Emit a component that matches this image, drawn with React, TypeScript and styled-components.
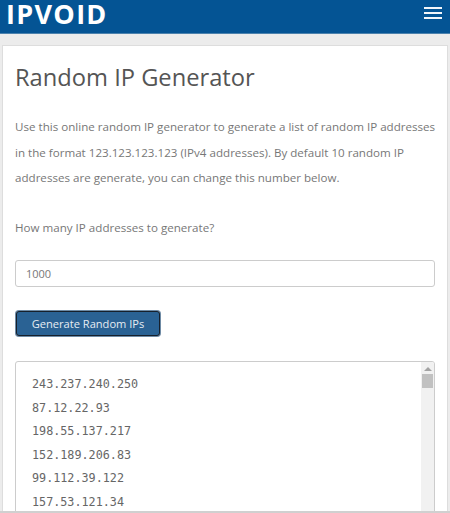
import { createGlobalStyle } from "styled-components";
import styled from "styled-components";

const ips = [
  "243.237.240.250",
  "87.12.22.93",
  "198.55.137.217",
  "152.189.206.83",
  "99.112.39.122",
  "157.53.121.34",
];

const GlobalStyle = createGlobalStyle`
  html, body {
    margin: 0;
    height: 513px;
    overflow: hidden;
    background: #ececec;
    font-family: "Open Sans", sans-serif;
  }
  * {
    box-sizing: border-box;
  }
`;

const Navbar = styled.header`
  display: flex;
  align-items: center;
  justify-content: space-between;
  height: 34px;
  padding: 0 7px 0 6px;
  background: #045494;
  border-bottom: 1px solid #4c82ad;
`;

const Brand = styled.div`
  color: #fff;
  font-size: 27px;
  font-weight: 700;
  letter-spacing: 1.3px;
  line-height: 27px;
  margin-top: -6px;
`;

const Burger = styled.div`
  display: flex;
  flex-direction: column;
  gap: 3px;
  width: 18px;
  margin-right: 1px;
  margin-top: -7px;
`;

const BurgerLine = styled.span`
  display: block;
  height: 2px;
  background: #f2f6fa;
`;

const Card = styled.main`
  height: 466px;
  margin: 11px 2px 0;
  padding: 0 12px;
  background: #fff;
  border: 1px solid #ddd;
  border-bottom: 0;
  overflow: hidden;
`;

const Title = styled.h1`
  margin: 15px 0 0;
  color: #555;
  font-size: 23.7px;
  font-weight: 400;
  line-height: 33px;
`;

const Text = styled.p`
  margin: 20px -4px 0 0;
  color: #777;
  font-size: 11.6px;
  line-height: 25.5px;
`;

const Label = styled(Text)`
  margin-top: 24px;
`;

const NumberInput = styled.input`
  display: block;
  width: 100%;
  height: 27px;
  margin-top: 20px;
  padding: 0 10px;
  color: #777;
  background: #fff;
  border: 1px solid #ccc;
  border-radius: 3px;
  font-family: inherit;
  font-size: 11px;
`;

const GenerateButton = styled.button`
  display: block;
  width: 144px;
  height: 25px;
  margin: 24px 0 0 1px;
  padding: 0;
  color: #e6edf3;
  background: #2a6294;
  border: 1px solid #16202c;
  border-radius: 3px;
  box-shadow: 0 0 0 1px #6f8ba5;
  font-family: inherit;
  font-size: 11.1px;
  font-weight: 500;
`;

const Results = styled.div`
  display: flex;
  justify-content: space-between;
  height: 170px;
  margin-top: 25px;
  border: 1px solid #ccc;
  border-radius: 3px;
  overflow: hidden;
`;

const IpList = styled.div`
  padding: 11px 16px;
`;

const IpLine = styled.div`
  color: #666;
  font-family: "DejaVu Sans Mono", monospace;
  font-size: 11.75px;
  line-height: 23.5px;
`;

const Track = styled.div`
  display: flex;
  flex-direction: column;
  align-items: center;
  width: 13px;
  padding-top: 5px;
  background: #f1f1f1;
`;

const ArrowUp = styled.div`
  width: 0;
  height: 0;
  border-left: 4px solid transparent;
  border-right: 4px solid transparent;
  border-bottom: 4px solid #a3a3a3;
`;

const Thumb = styled.div`
  width: 11px;
  height: 14px;
  margin-top: 3px;
  background: #c1c1c1;
`;

const BottomEdge = styled.div`
  height: 2px;
  background: #d0d0d0;
`;

export default function App() {
  return (
    <>
      <GlobalStyle />
      <Navbar>
        <Brand>IPVOID</Brand>
        <Burger>
          <BurgerLine />
          <BurgerLine />
          <BurgerLine />
        </Burger>
      </Navbar>
      <Card>
        <Title>Random IP Generator</Title>
        <Text>
          Use this online random IP generator to generate a list of random IP addresses in the
          format 123.123.123.123 (IPv4 addresses). By default 10 random IP addresses are generate,
          you can change this number below.
        </Text>
        <Label>How many IP addresses to generate?</Label>
        <NumberInput defaultValue="1000" />
        <GenerateButton>Generate Random IPs</GenerateButton>
        <Results>
          <IpList>
            {ips.map((ip) => (
              <IpLine key={ip}>{ip}</IpLine>
            ))}
          </IpList>
          <Track>
            <ArrowUp />
            <Thumb />
          </Track>
        </Results>
      </Card>
      <BottomEdge />
    </>
  );
}
